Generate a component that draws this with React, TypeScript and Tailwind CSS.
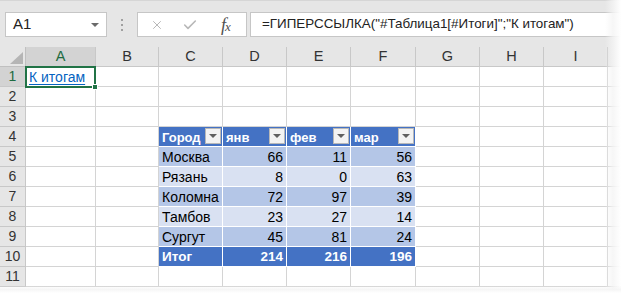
import { Check, X } from 'lucide-react';

type Cell = { text: string; num?: boolean };

const tableRows: { kind: 'head' | 'dark' | 'light' | 'total'; cells: Cell[] }[] = [
  { kind: 'head', cells: [{ text: 'Город' }, { text: 'янв' }, { text: 'фев' }, { text: 'мар' }] },
  { kind: 'dark', cells: [{ text: 'Москва' }, { text: '66', num: true }, { text: '11', num: true }, { text: '56', num: true }] },
  { kind: 'light', cells: [{ text: 'Рязань' }, { text: '8', num: true }, { text: '0', num: true }, { text: '63', num: true }] },
  { kind: 'dark', cells: [{ text: 'Коломна' }, { text: '72', num: true }, { text: '97', num: true }, { text: '39', num: true }] },
  { kind: 'light', cells: [{ text: 'Тамбов' }, { text: '23', num: true }, { text: '27', num: true }, { text: '14', num: true }] },
  { kind: 'dark', cells: [{ text: 'Сургут' }, { text: '45', num: true }, { text: '81', num: true }, { text: '24', num: true }] },
  { kind: 'total', cells: [{ text: 'Итог' }, { text: '214', num: true }, { text: '216', num: true }, { text: '196', num: true }] },
];

const colWidths = ['w-[70px]', 'w-[63px]', 'w-[64px]', 'w-[64px]', 'w-[64px]', 'w-[65px]', 'w-[64px]', 'w-[64px]', 'w-[64px]'];
const letters = ['A', 'B', 'C', 'D', 'E', 'F', 'G', 'H', 'I'];

const kindBg = {
  head: 'bg-[#4472c4] text-white font-bold text-[13px]',
  dark: 'bg-[#b4c6e7] text-black text-[14px]',
  light: 'bg-[#d9e1f2] text-black text-[14px]',
  total: 'bg-[#4472c4] text-white font-bold text-[13.5px]',
};

function FilterButton() {
  return (
    <div className="absolute right-[1px] top-[1px] w-[16px] h-[16px] bg-[#f3f3f3] border border-[#b8b8b8] flex items-center justify-center">
      <div className="w-0 h-0 border-l-[4px] border-r-[4px] border-t-[4px] border-l-transparent border-r-transparent border-t-[#606060]" />
    </div>
  );
}

function GridRow({ n }: { n: number }) {
  const t = n >= 4 && n <= 10 ? tableRows[n - 4] : null;
  return (
    <div className="flex h-[20px]">
      <div
        className={`w-[26px] shrink-0 border-r border-b border-[#c8c8c8] flex items-center justify-center text-[14px] ${
          n === 1 ? 'bg-[#d3d3d3] text-[#1e6b41]' : 'bg-[#e6e6e6] text-[#333]'
        }`}
      >
        {n}
      </div>
      {colWidths.map((w, i) => {
        const inTable = t && i >= 2 && i <= 5;
        if (inTable && t) {
          const c = t.cells[i - 2];
          return (
            <div
              key={i}
              className={`${w} shrink-0 relative border-r border-b border-white flex items-center pt-[2px] px-[3px] ${kindBg[t.kind]} ${
                c.num ? 'justify-end' : ''
              }`}
            >
              {c.text}
              {t.kind === 'head' && <FilterButton />}
            </div>
          );
        }
        return (
          <div key={i} className={`${w} shrink-0 border-r border-b border-[#d4d4d4] flex items-center pt-[2px] px-[3px] text-[14px]`}>
            {n === 1 && i === 0 && <span className="text-[#0563c1] underline underline-offset-2">К итогам</span>}
          </div>
        );
      })}
      <div className="flex-1 border-b border-[#d4d4d4]" />
    </div>
  );
}

export default function App() {
  return (
    <div className="relative w-[621px] h-[293px] overflow-hidden bg-white font-['Liberation_Sans',Arial,sans-serif] text-black">
      {/* formula bar */}
      <div className="h-[47px] bg-[#e6e6e6] flex items-start pt-[11px] border-t border-[#d6d6d6]">
        <div className="ml-[5px] w-[102px] h-[25px] bg-white border border-[#c6c6c6] flex items-center justify-between pl-[7px] pr-[7px] text-[15px] text-[#222]">
          <span>A1</span>
          <div className="w-0 h-0 border-l-[4px] border-r-[4px] border-t-[4px] border-l-transparent border-r-transparent border-t-[#6a6a6a]" />
        </div>
        <div className="ml-[14px] h-[25px] flex flex-col items-center justify-center gap-[3px]">
          <div className="w-[2px] h-[2px] bg-[#a0a0a0]" />
          <div className="w-[2px] h-[2px] bg-[#a0a0a0]" />
          <div className="w-[2px] h-[2px] bg-[#a0a0a0]" />
        </div>
        <div className="ml-[14px] w-[110px] h-[25px] bg-white border border-[#c6c6c6] flex items-center pl-[12px]">
          <X className="w-[14px] h-[14px] text-[#b3b3b3]" strokeWidth={1.6} />
          <Check className="w-[16px] h-[16px] text-[#b8b8b8] ml-[18px]" strokeWidth={2.4} />
          <span className="ml-[23px] font-['Liberation_Serif',serif] italic text-[18px] text-[#505050] leading-none tracking-[-1px]">
            f<span className="text-[13px]">x</span>
          </span>
        </div>
        <div className="ml-[3px] flex-1 h-[25px] bg-white border border-[#c6c6c6] flex items-center pl-[11px] text-[13.4px] text-[#222] whitespace-nowrap">
          =ГИПЕРССЫЛКА("#Таблица1[#Итоги]";"К итогам")
        </div>
      </div>

      {/* column headers */}
      <div className="flex h-[20px] bg-[#e6e6e6]">
        <div className="w-[26px] shrink-0 border-r border-b border-[#c0c0c0] flex items-end justify-end pr-[2px] pb-[2px]">
          <svg width="13" height="12" viewBox="0 0 13 12">
            <polygon points="13,0 13,12 0,12" fill="#b5b5b5" />
          </svg>
        </div>
        {colWidths.map((w, i) => (
          <div
            key={i}
            className={`${w} shrink-0 border-r border-b border-[#c8c8c8] flex items-center justify-center text-[14.5px] ${
              i === 0 ? 'bg-[#d3d3d3] text-[#1e6b41] border-b-[#217346]' : 'text-[#333]'
            }`}
          >
            {letters[i]}
          </div>
        ))}
        <div className="flex-1 border-b border-[#c8c8c8]" />
      </div>

      {/* rows */}
      {Array.from({ length: 11 }, (_, k) => (
        <GridRow key={k} n={k + 1} />
      ))}

      {/* selection of A1 */}
      <div className="absolute left-[25px] top-[66px] w-[71px] h-[22px] border-2 border-[#217346] pointer-events-none" />
      <div className="absolute left-[92px] top-[84px] w-[6px] h-[6px] bg-[#217346] border border-white" />

      {/* faded right and bottom edges */}
      <div className="absolute right-0 top-0 w-[16px] h-full bg-gradient-to-r from-transparent via-[#f4f4f4]/80 to-white pointer-events-none" />
      <div className="absolute left-0 bottom-0 w-full h-[7px] bg-gradient-to-b from-transparent via-[#f4f4f4]/80 to-white pointer-events-none" />
    </div>
  );
}
